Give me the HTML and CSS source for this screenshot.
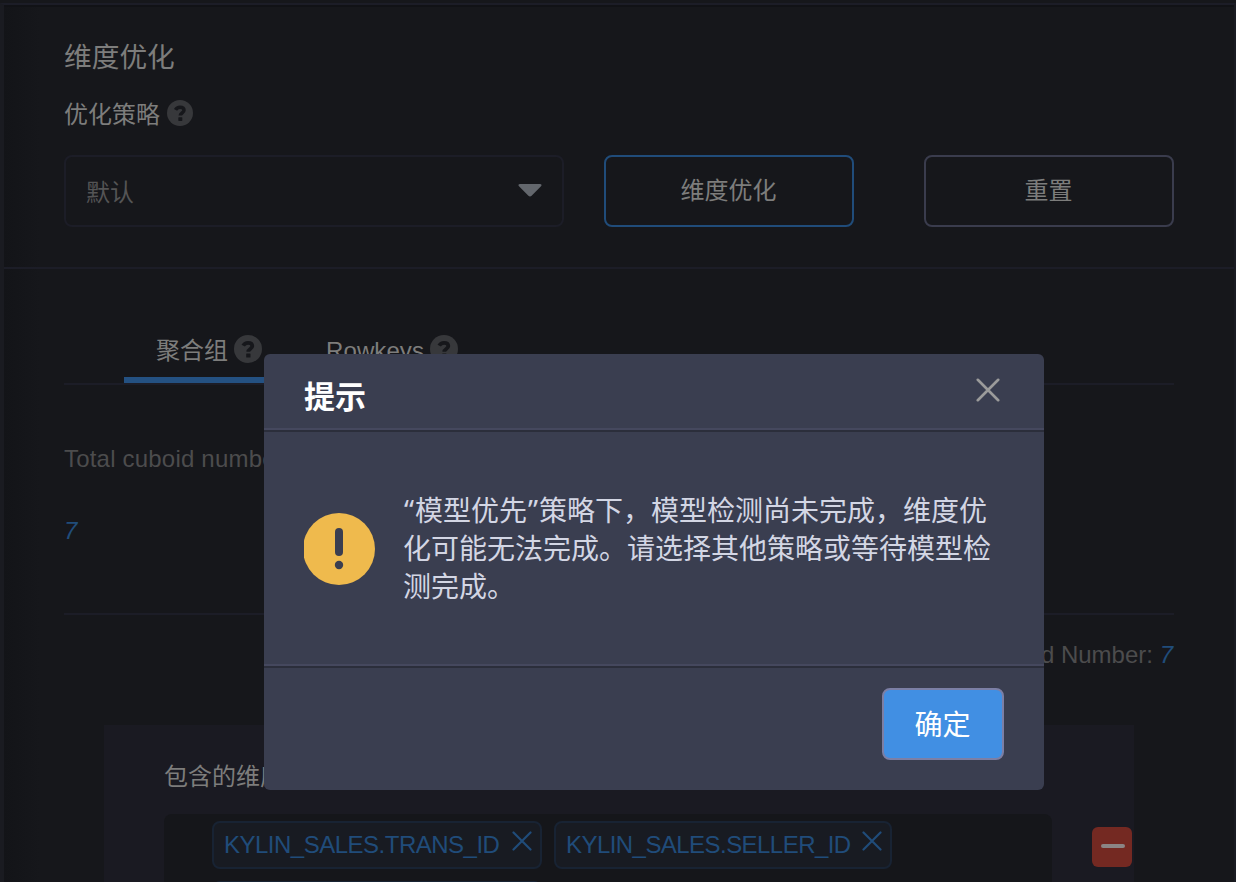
FILE: index.html
```html
<!DOCTYPE html>
<html lang="zh-CN">
<head>
<meta charset="utf-8">
<title>维度优化</title>
<link rel="stylesheet" href="styles.css">
</head>
<body>
<svg class="defs" width="0" height="0">
  <symbol id="help" viewBox="0 0 28 28">
    <circle cx="14" cy="14" r="14" fill="currentColor"/>
    <path d="M9.200 10.600C10.200 8.700 11.800 7.800 14 7.800c2.600 0 4.300 1.300 4.300 3.300 0 2.900-4 2.900-4 5.600" fill="none" stroke="#16171b" stroke-width="3.800"/>
    <rect x="12.200" y="18.600" width="4.300" height="4" rx=".5" fill="#16171b"/>
  </symbol>
  <symbol id="cross" viewBox="0 0 20 20">
    <path d="M1.500 1.500l17 17M18.500 1.500l-17 17" fill="none" stroke="currentColor" stroke-width="2.200" stroke-linecap="round"/>
  </symbol>
</svg>
<div class="page">
  <section class="strategy">
    <h1 class="title">维度优化</h1>
    <div class="label">优化策略<svg class="help help-small"><use href="#help"/></svg></div>
    <div class="controls">
      <div class="select"><span>默认</span>
        <svg class="caret" viewBox="0 0 24 13"><path d="M2 0h20c1.600 0 2 1.200 1 2.200l-9.400 9.600c-1 1-2.200 1-3.200 0L1 2.200C0 1.200.4 0 2 0z" fill="#63676d"/></svg>
      </div>
      <button class="btn btn-blue">维度优化</button>
      <button class="btn">重置</button>
    </div>
  </section>
  <section class="groups">
    <nav class="tabs">
      <div class="tab active">聚合组<svg class="help"><use href="#help"/></svg></div>
      <div class="tab"><span class="latin">Rowkeys</span><svg class="help"><use href="#help"/></svg></div>
    </nav>
    <div class="total">
      <div class="muted">Total cuboid number:</div>
      <div class="count">7</div>
    </div>
    <div class="number muted">Cuboid Number: <i>7</i></div>
    <div class="card">
      <div class="card-title">包含的维度</div>
      <div class="row">
        <div class="tags">
          <div class="tag">KYLIN_SALES.TRANS_ID<svg class="tag-x"><use href="#cross"/></svg></div>
          <div class="tag tag-second">KYLIN_SALES.SELLER_ID<svg class="tag-x"><use href="#cross"/></svg></div>
          <div class="tag"></div>
        </div>
        <button class="remove"><span></span></button>
      </div>
    </div>
  </section>
</div>
<div class="modal">
  <header class="modal-head"><h2>提示</h2><svg class="close"><use href="#cross"/></svg></header>
  <div class="modal-body">
    <svg class="warn" viewBox="0 0 72 72">
      <circle cx="35" cy="36" r="36" fill="#efba4d"/>
      <rect x="31" y="15" width="8" height="28" rx="4" fill="#3a3e50"/>
      <circle cx="35" cy="52" r="4.200" fill="#3a3e50"/>
    </svg>
    <div class="message">
      <div class="line"><span class="quote">“</span><span>模型优先</span><span class="quote">”</span><span>策略下，模型检测尚未完成，维度优</span></div>
      <div class="line">化可能无法完成。请选择其他策略或等待模型检</div>
      <div class="line">测完成。</div>
    </div>
  </div>
  <footer class="modal-foot"><button class="ok">确定</button></footer>
</div>
</body>
</html>
```

FILE: styles.css
```css
* { box-sizing: border-box; }
html, body { margin: 0; width: 1236px; height: 882px; overflow: hidden; }
body {
  background: #16171b;
  color: #7d7d7c;
  font: 24px/36px "Liberation Sans", "Noto Sans CJK SC", sans-serif;
}
h1, h2 { margin: 0; }
button { font: inherit; color: inherit; background: none; padding: 0; }
.defs { position: absolute; }
.page {
  height: 882px;
  margin-top: 3px;
  border-top: 2px solid #1c1d27;
  border-left: 4px solid #1a1b21;
  border-right: 2px solid #1a1b22;
  overflow: hidden;
  background: linear-gradient(90deg, #131418, #16171b 36px);
}
.strategy {
  height: 264px;
  border-top: 2px solid #111216;
  border-bottom: 2px solid #1c1d27;
  padding: 28px 60px 0;
}
.title { font-size: 27.700px; font-weight: 400; line-height: 40px; font-family: "Noto Sans CJK SC", sans-serif; }
.label { display: flex; align-items: center; height: 36px; margin-top: 22px; }
.help { width: 28px; height: 28px; margin-left: 6px; color: #37383b; flex: none; }
.help-small { width: 26px; height: 26px; margin: -4px 0 0 7px; }
.controls { display: flex; margin-top: 22px; }
.select {
  width: 500px; height: 72px; padding: 4px 20px 0 20px;
  display: flex; align-items: center; justify-content: space-between;
  border: 2px solid #1c1d27; border-radius: 8px; color: #545455;
}
.caret { width: 24px; height: 13px; margin-top: -6px; }
.btn { width: 250px; height: 72px; border: 2px solid #3a3c4d; border-radius: 8px; margin-left: 70px; padding-right: 1px; }
.btn-blue { border-color: #204c7a; margin-left: 40px; }
.groups { padding: 56px 60px 0; }
.tabs { display: flex; height: 60px; padding-left: 60px; border-bottom: 2px solid #1c1d27; }
.tab { display: flex; height: 58px; padding: 8px 32px 0; align-items: flex-start; }
.tab .help { margin-top: 2px; }
.tab.active { border-bottom: 6px solid #245182; }
.total { height: 230px; border-bottom: 2px solid #1c1d27; padding-top: 56px; }
.muted { color: #4c4c4d; }
.latin { letter-spacing: .1px; }
.total .muted { letter-spacing: .2px; }
.count { margin-top: 36px; color: #204c7a; font-style: italic; }
.number { margin-top: 22px; padding-right: 1px; text-align: right; }
.number i { color: #204c7a; }
.card { margin: 52px 40px 0; height: 200px; padding: 34px 0 0 60px; background: #1a1a22; }
.row { display: flex; margin-top: 19px; }
.tags {
  width: 888px; height: 140px; padding: 7px 48px;
  background: #15161a; border-radius: 8px;
  display: flex; flex-wrap: wrap; align-content: flex-start; gap: 12px;
}
.tag {
  width: 330px; height: 48px; padding: 0 8px 0 10px;
  display: flex; justify-content: space-between; line-height: 44px; letter-spacing: -.5px;
  color: #204c7a; background: #181b22; border: 2px solid #182333; border-radius: 8px;
}
.tag-second { width: 338px; letter-spacing: -.55px; }
.tag-x { width: 20px; height: 20px; margin-top: 8px; }
.remove {
  width: 40px; height: 40px; margin: 13px 0 0 40px; flex: none;
  border: 0; border-radius: 6px; background: #742922;
  display: flex; align-items: center; justify-content: center;
}
.remove span { width: 24px; height: 4px; border-radius: 2px; background: #8b8585; margin-left: 1px; margin-top: -2px; }
.modal {
  position: absolute; left: 264px; top: 354px; width: 780px; height: 436px;
  background: #3a3e50; border-radius: 6px;
}
.modal-head {
  height: 74px; padding: 21px 44px 0 40px;
  display: flex; justify-content: space-between;
}
.modal-head h2 { font: 700 31px/40px "Noto Sans CJK SC", sans-serif; color: #fff; }
.close { width: 24px; height: 24px; color: #9b9b9b; margin-top: 3px; }
.modal-body {
  height: 236px; padding: 61px 50px 0 40px; display: flex;
  border-top: 2px solid #45485e; box-shadow: inset 0 2px #2b2e3b;
}
.warn { width: 72px; height: 72px; margin-top: 22px; flex: none; }
.message {
  width: 590px; margin: -1px 0 0 27px; color: #d3d6e4;
  font: 28px/38px "Noto Sans CJK SC", sans-serif;
}
.line { display: flex; height: 38px; white-space: nowrap; }
.quote { font-family: "Noto Sans", sans-serif; width: 12px; padding-left: 1px; }
.modal-foot {
  height: 126px; padding: 22px 40px; display: flex; justify-content: flex-end;
  border-top: 2px solid #45485e; box-shadow: inset 0 2px #2b2e3b;
}
.ok {
  width: 122px; height: 72px; padding: 3px 1px 0 0; font-size: 28px; color: #fff;
  background: #418fe3; border: 2px solid #7c7fa5; border-radius: 8px;
}
```
